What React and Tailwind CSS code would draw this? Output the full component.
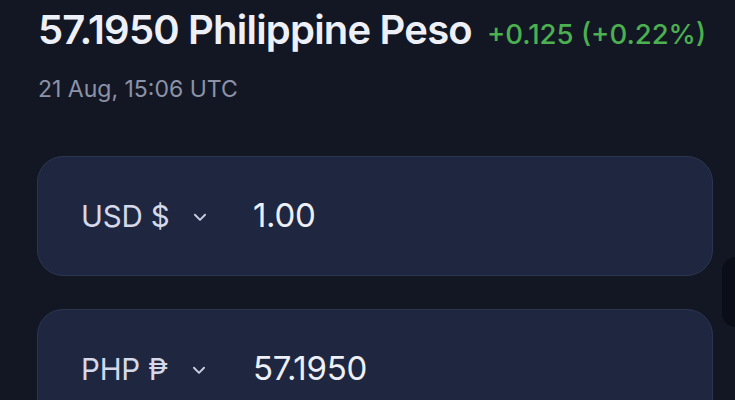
import React from 'react';

function Chevron() {
  return (
    <svg width="18" height="18" viewBox="0 0 16 16" fill="none" className="text-[#c9cde0]">
      <path d="M3.5 6 L8 10.5 L12.5 6" stroke="currentColor" strokeWidth="1.7" strokeLinecap="round" strokeLinejoin="round" />
    </svg>
  );
}

function CurrencyRow({ code, symbol, value }) {
  return (
    <div className="h-[120px] rounded-[26px] border border-[#2c3550] bg-[#1f2740] flex items-center pl-[43px]">
      <div className="flex items-center w-[172px] text-[29.5px] text-[#d4d8ea] tracking-[-0.2px]">
        <span>{code} {symbol}</span>
        <span className="ml-[22px] mt-[2px]"><Chevron /></span>
      </div>
      <span className="text-[33px] text-[#eef0f8] tracking-[-0.3px]">{value}</span>
    </div>
  );
}

export default function App() {
  return (
    <div className="relative w-[735px] h-[400px] overflow-hidden bg-[#131724] font-['Inter',sans-serif]">
      <div className="pl-[38px] pr-[22px] pt-[10px]">
        <div className="flex items-baseline">
          <h1 className="text-[40px] leading-[40px] font-semibold text-[#eef0f8] tracking-[-0.8px]">57.1950 Philippine Peso</h1>
          <span className="ml-[15px] text-[27.5px] leading-[40px] font-medium text-[#4caf50]">+0.125 (+0.22%)</span>
        </div>
        <p className="mt-[24px] text-[23px] leading-[23px] text-[#8c92a8]">21 Aug, 15:06 UTC</p>
      </div>
      <div className="mt-[55px] pl-[37px] pr-[22px] flex flex-col gap-[33px]">
        <CurrencyRow code="USD" symbol="$" value="1.00" />
        <CurrencyRow code="PHP" symbol="₱" value="57.1950" />
      </div>
      <div className="absolute left-[722px] top-[257px] w-[40px] h-[70px] rounded-[14px] bg-[#0b0e18]" />
    </div>
  );
}
